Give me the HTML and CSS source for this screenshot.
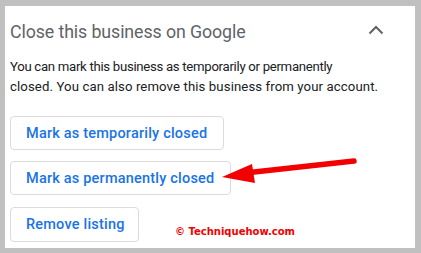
FILE: index.html
```html
<!DOCTYPE html>
<html lang="en">

<head>
	<meta charset="UTF-8">
	<title>Close this business on Google</title>
	<link rel="stylesheet" href="styles.css">
</head>

<body>
	<div class="card">
		<div class="header">
			<span class="title">Close this business on Google</span>
			<svg class="chevron" width="16" height="10" viewBox="0 0 16 10">
				<path d="M1.5 8.5 L8 2 L14.5 8.5" fill="none" stroke="#5f6368" stroke-width="2"/>
			</svg>
		</div>
		<p class="desc"><span class="line1">You can mark this business as temporarily or permanently</span><br><span class="line2">closed. You can also remove this business from your account.</span></p>
		<div class="actions">
			<button class="btn btn_temp">Mark as temporarily closed</button>
			<button class="btn btn_perm">Mark as permanently closed</button>
			<div class="last_row">
				<button class="btn btn_remove">Remove listing</button>
				<span class="mark">© Techniquehow.com</span>
			</div>
		</div>
		<svg class="arrow" width="421" height="253" viewBox="0 0 421 253">
			<line x1="354" y1="161" x2="245" y2="173" stroke="#f20000" stroke-width="5.5" stroke-linecap="round"/>
			<polygon points="222,177 252,164 255,183" fill="#f20000"/>
		</svg>
	</div>
</body>

</html>
```

FILE: styles.css
```css
* {
	margin: 0;
	padding: 0;
	box-sizing: border-box;
}

body {
	background: #c0c0c0;
	width: 421px;
	height: 253px;
	padding: 6px 6px 5px 5px;
	overflow: hidden;
}

.card {
	background: #fff;
	height: 242px;
	padding: 0 5px;
	font-family: Roboto, "Liberation Sans", sans-serif;
}

.header {
	display: flex;
	align-items: center;
	justify-content: space-between;
	height: 48px;
	padding-top: 2px;
}

.title {
	font-size: 17.8px;
	color: #5f6368;
	letter-spacing: -0.1px;
}

.chevron {
	margin-right: 26px;
	margin-top: -2px;
}

.desc {
	margin-top: 3px;
	font-size: 13.2px;
	line-height: 20px;
	color: #202124;
	white-space: nowrap;
}

.line1 {
	letter-spacing: -0.3px;
}

.line2 {
	letter-spacing: 0.1px;
}

.actions {
	margin-top: 19px;
	display: flex;
	flex-direction: column;
	align-items: flex-start;
	gap: 11px;
}

.btn {
	background: #fff;
	border: 1px solid #dadce0;
	border-radius: 4px;
	color: #1a73e8;
	font-family: Roboto, "Liberation Sans", sans-serif;
	font-weight: 500;
	font-size: 14.5px;
	height: 34px;
	padding: 0 15px;
	letter-spacing: 0.2px;
	white-space: nowrap;
	text-align: left;
}

.btn_temp {
	width: 214px;
}

.btn_perm {
	width: 221px;
}

.btn_remove {
	width: 129px;
	height: 35px;
	margin-top: 1px;
}

.last_row {
	display: flex;
	align-items: center;
}

.mark {
	margin-left: 36px;
	margin-top: 14px;
	color: #f20000;
	font-family: "DejaVu Sans", Verdana, sans-serif;
	font-weight: bold;
	font-size: 10px;
}

.arrow {
	position: absolute;
	left: 0;
	top: 0;
	pointer-events: none;
}
```
